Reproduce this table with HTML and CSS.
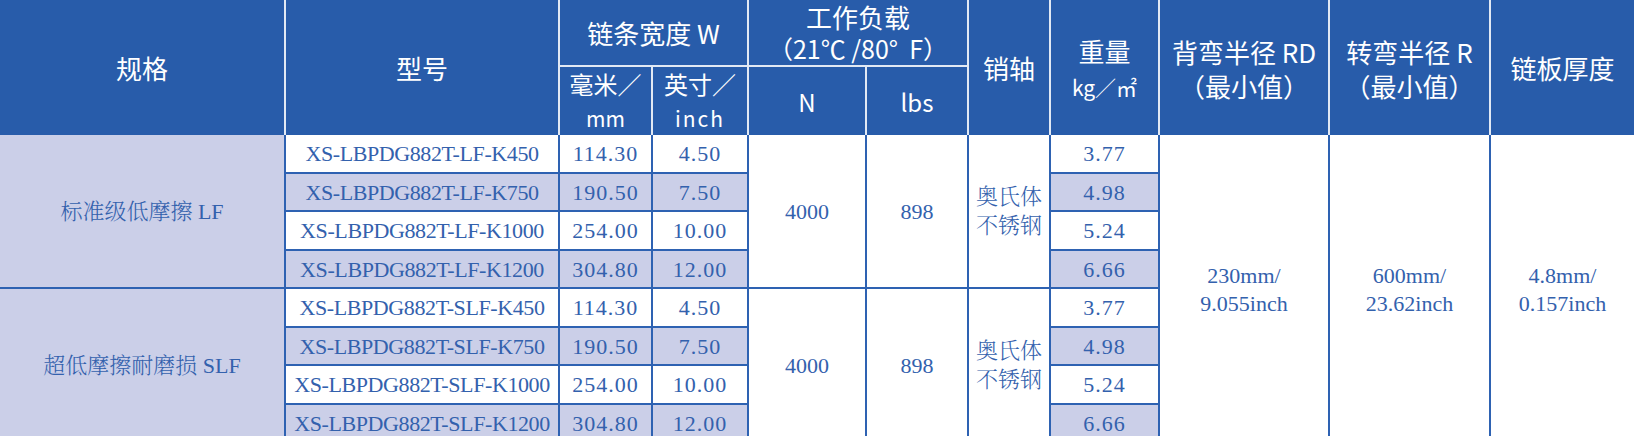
FILE: index.html
```html
<!DOCTYPE html>
<html lang="zh-CN">
<head>
<meta charset="utf-8">
<title>链条规格</title>
<link rel="stylesheet" href="styles.css">
</head>
<body>
<table class="spec">
  <colgroup>
    <col class="c-grade">
    <col class="c-model">
    <col class="c-mm">
    <col class="c-inch">
    <col class="c-n">
    <col class="c-lbs">
    <col class="c-pin">
    <col class="c-weight">
    <col class="c-rd">
    <col class="c-r">
    <col class="c-plate">
  </colgroup>
  <thead>
    <tr class="h-top">
      <th rowspan="2">规格</th>
      <th rowspan="2">型号</th>
      <th colspan="2" class="split">链条宽度 W</th>
      <th colspan="2" class="split load">工作负载<br><span class="cond">（21℃ /80°&nbsp; F）</span></th>
      <th rowspan="2">销轴</th>
      <th rowspan="2" class="two-line">重量<br><span class="unit">kg／㎡</span></th>
      <th rowspan="2" class="two-line">背弯半径 RD<br>（最小值）</th>
      <th rowspan="2" class="two-line">转弯半径 R<br>（最小值）</th>
      <th rowspan="2" class="last">链板厚度</th>
    </tr>
    <tr class="h-sub">
      <th class="sub">毫米／<br><span class="unit">mm</span></th>
      <th class="sub">英寸／<br><span class="unit inch">inch</span></th>
      <th class="sub">N</th>
      <th class="sub">lbs</th>
    </tr>
  </thead>
  <tbody>
    <tr class="r1">
      <td rowspan="4" class="grade group-end">标准级低摩擦 LF</td>
      <td class="model">XS-LBPDG882T-LF-K450</td>
      <td class="num">114.30</td>
      <td class="num">4.50</td>
      <td rowspan="4" class="group-end">4000</td>
      <td rowspan="4" class="group-end">898</td>
      <td rowspan="4" class="group-end pin">奥氏体<br>不锈钢</td>
      <td class="num">3.77</td>
      <td rowspan="8" class="radius">230mm/<br>9.055inch</td>
      <td rowspan="8" class="radius">600mm/<br>23.62inch</td>
      <td rowspan="8" class="radius last">4.8mm/<br>0.157inch</td>
    </tr>
    <tr class="r2 alt">
      <td class="model">XS-LBPDG882T-LF-K750</td>
      <td class="num">190.50</td>
      <td class="num">7.50</td>
      <td class="num">4.98</td>
    </tr>
    <tr class="r3">
      <td class="model">XS-LBPDG882T-LF-K1000</td>
      <td class="num">254.00</td>
      <td class="num">10.00</td>
      <td class="num">5.24</td>
    </tr>
    <tr class="r4 alt">
      <td class="model">XS-LBPDG882T-LF-K1200</td>
      <td class="num">304.80</td>
      <td class="num">12.00</td>
      <td class="num">6.66</td>
    </tr>
    <tr class="r5">
      <td rowspan="4" class="grade group-end">超低摩擦耐磨损 SLF</td>
      <td class="model">XS-LBPDG882T-SLF-K450</td>
      <td class="num">114.30</td>
      <td class="num">4.50</td>
      <td rowspan="4" class="group-end">4000</td>
      <td rowspan="4" class="group-end">898</td>
      <td rowspan="4" class="group-end pin">奥氏体<br>不锈钢</td>
      <td class="num">3.77</td>
    </tr>
    <tr class="r6 alt">
      <td class="model">XS-LBPDG882T-SLF-K750</td>
      <td class="num">190.50</td>
      <td class="num">7.50</td>
      <td class="num">4.98</td>
    </tr>
    <tr class="r7">
      <td class="model">XS-LBPDG882T-SLF-K1000</td>
      <td class="num">254.00</td>
      <td class="num">10.00</td>
      <td class="num">5.24</td>
    </tr>
    <tr class="r8 alt">
      <td class="model">XS-LBPDG882T-SLF-K1200</td>
      <td class="num">304.80</td>
      <td class="num">12.00</td>
      <td class="num">6.66</td>
    </tr>
  </tbody>
</table>
</body>
</html>
```

FILE: styles.css
```css
html, body {
  margin: 0;
  padding: 0;
  background: #ffffff;
  overflow: hidden;
}

.spec {
  border-collapse: separate;
  border-spacing: 0;
  table-layout: fixed;
  width: 1634px;
}

.c-grade { width: 286px; }
.c-model { width: 274px; }
.c-mm { width: 93px; }
.c-inch { width: 96px; }
.c-n { width: 118px; }
.c-lbs { width: 102px; }
.c-pin { width: 82px; }
.c-weight { width: 109px; }
.c-rd { width: 170px; }
.c-r { width: 161px; }
.c-plate { width: 143px; }

/* ---------- header ---------- */
.spec th {
  background: #285caa;
  color: #ffffff;
  font-family: "Noto Sans CJK SC", "Noto Sans", sans-serif;
  font-weight: 400;
  font-size: 26px;
  line-height: 34px;
  text-align: center;
  vertical-align: middle;
  padding: 0;
  border-right: 2px solid #e2e9f4;
  white-space: nowrap;
}

.spec th.last { border-right: none; }

.h-top { height: 67px; }
.h-sub { height: 68px; }

.spec th.split {
  border-bottom: 2px solid #e2e9f4;
}

.spec th.load {
  line-height: 31px;
}

.spec th .cond {
  font-size: 25px;
}

.spec th.two-line {
  padding-top: 2px;
}

.spec th.sub {
  font-size: 24px;
  line-height: 33px;
}

.spec th .unit {
  font-size: 21px;
}

.spec th .inch {
  letter-spacing: 2px;
}

/* ---------- body ---------- */
.spec td {
  font-family: "Liberation Serif", "Noto Serif CJK SC", "Noto Sans CJK SC", serif;
  font-size: 22px;
  line-height: 29px;
  color: #3361ad;
  text-align: center;
  vertical-align: middle;
  padding: 0;
  background: #ffffff;
  border-right: 2px solid #2e62b2;
  white-space: nowrap;
}

.spec td.last { border-right: none; }

.r1, .r3, .r5, .r7 { height: 39px; }
.r2, .r4, .r6, .r8 { height: 38px; }

.spec td.model,
.spec td.num {
  border-bottom: 2px solid #2e62b2;
}

.spec td.model {
  letter-spacing: -0.4px;
}

.spec td.num {
  letter-spacing: 1px;
}

.spec td.group-end {
  border-bottom: 2px solid #2e62b2;
}

.spec td.grade {
  background: #cbcfe8;
  font-weight: 300;
}

.spec td.pin {
  font-weight: 300;
}

.spec tr.alt td.model,
.spec tr.alt td.num {
  background: #cbcfe8;
}

.spec td.radius {
  line-height: 28px;
  padding-top: 2px;
}
```
